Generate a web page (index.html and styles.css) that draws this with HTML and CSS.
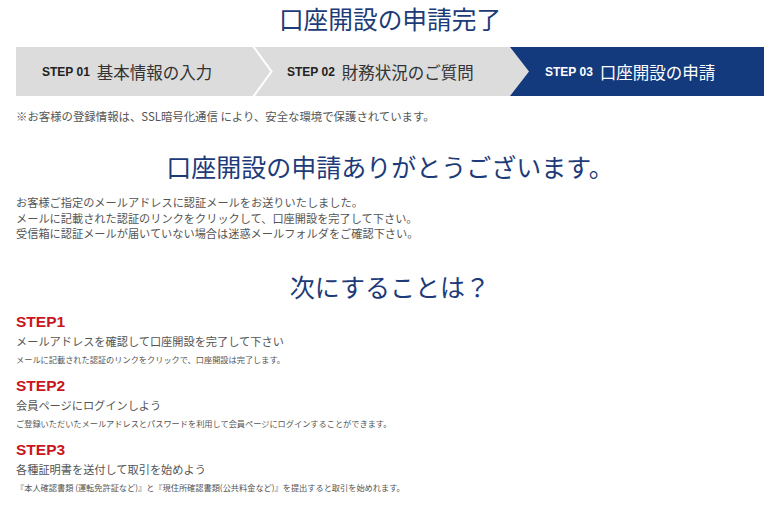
FILE: index.html
```html
<!DOCTYPE html>
<html lang="ja">
<head>
<meta charset="utf-8">
<title>口座開設の申請完了</title>
<link rel="stylesheet" href="styles.css">
</head>
<body>
<div class="wrap">
  <h1 class="title">口座開設の申請完了</h1>
  <div class="steps">
    <div class="step s1">
      <span class="num">STEP 01</span><span class="label">基本情報の入力</span>
      <svg class="chev" width="22" height="49" viewBox="0 0 22 49"><polyline points="2,-1 20.5,24.5 2,50" fill="none" stroke="#ffffff" stroke-width="2"/></svg>
    </div>
    <div class="step s2">
      <span class="num">STEP 02</span><span class="label">財務状況のご質問</span>
    </div>
    <div class="step s3">
      <span class="num">STEP 03</span><span class="label">口座開設の申請</span>
    </div>
  </div>
  <p class="notice">※お客様の登録情報は、SSL暗号化通信 により、安全な環境で保護されています。</p>

  <h2 class="heading thanks">口座開設の申請ありがとうございます。</h2>
  <p class="body-text">お客様ご指定のメールアドレスに認証メールをお送りいたしました。<br>メールに記載された認証のリンクをクリックして、口座開設を完了して下さい。<br>受信箱に認証メールが届いていない場合は迷惑メールフォルダをご確認下さい。</p>

  <h2 class="heading next">次にすることは？</h2>
  <div class="next-steps">
    <div class="item">
      <h3 class="item-title">STEP1</h3>
      <p class="lead">メールアドレスを確認して口座開設を完了して下さい</p>
      <p class="note">メールに記載された認証のリンクをクリックで、口座開設は完了します。</p>
    </div>
    <div class="item">
      <h3 class="item-title">STEP2</h3>
      <p class="lead">会員ページにログインしよう</p>
      <p class="note">ご登録いただいたメールアドレスとパスワードを利用して会員ページにログインすることができます。</p>
    </div>
    <div class="item">
      <h3 class="item-title">STEP3</h3>
      <p class="lead">各種証明書を送付して取引を始めよう</p>
      <p class="note">『本人確認書類 (運転免許証など)』と『現住所確認書類(公共料金など)』を提出すると取引を始めれます。</p>
    </div>
  </div>
</div>
</body>
</html>
```

FILE: styles.css
```css
html, body {
  margin: 0;
  padding: 0;
  background: #ffffff;
}
body {
  font-family: "Noto Sans CJK JP", "Liberation Sans", sans-serif;
  color: #555555;
}
.wrap {
  padding: 0 14px 0 16px;
}
.title {
  margin: 0;
  font-size: 24.7px;
  line-height: 36px;
  font-weight: normal;
  text-align: center;
  color: #1d3b78;
}
.steps {
  margin-top: 11px;
  height: 49px;
  display: flex;
  background: #dcdcdc;
}
.step {
  display: flex;
  align-items: center;
  box-sizing: border-box;
  height: 49px;
  color: #333333;
}
.num {
  font-family: "Liberation Sans", Arial, sans-serif;
  font-weight: bold;
  font-size: 12px;
  margin-right: 7px;
  color: #222222;
}
.label {
  font-size: 16.5px;
  line-height: 20px;
}
.s1 {
  position: relative;
  width: 257px;
  padding-left: 26px;
}
.chev {
  position: absolute;
  right: 0;
  top: 0;
}
.s2 {
  width: 237px;
  padding-left: 14px;
}
.s3 {
  flex: 1;
  padding-left: 35px;
  background: #143a7e;
  clip-path: polygon(0 0, 100% 0, 100% 100%, 0 100%, 19px 50%);
}
.s3 .num,
.s3 .label {
  color: #ffffff;
}
.notice {
  margin: 12px 0 0;
  font-size: 11.4px;
  line-height: 16px;
  color: #555555;
}
.heading {
  margin: 0;
  font-size: 25px;
  line-height: 36px;
  font-weight: normal;
  text-align: center;
  color: #1d3b78;
}
.thanks {
  margin-top: 24px;
}
.body-text {
  margin: 11px 0 0;
  font-size: 11.2px;
  line-height: 15.5px;
  color: #555555;
}
.next {
  margin-top: 26px;
}
.next-steps {
  margin-top: 8px;
}
.item {
  margin-bottom: 8px;
}
.item-title {
  margin: 0;
  font-family: "Liberation Sans", Arial, sans-serif;
  font-weight: bold;
  font-size: 15.5px;
  line-height: 20px;
  color: #c8161d;
}
.lead {
  margin: 0;
  font-size: 11.2px;
  line-height: 18px;
  color: #555555;
}
.note {
  margin: 0;
  font-size: 8.2px;
  line-height: 18px;
  color: #555555;
}
```
